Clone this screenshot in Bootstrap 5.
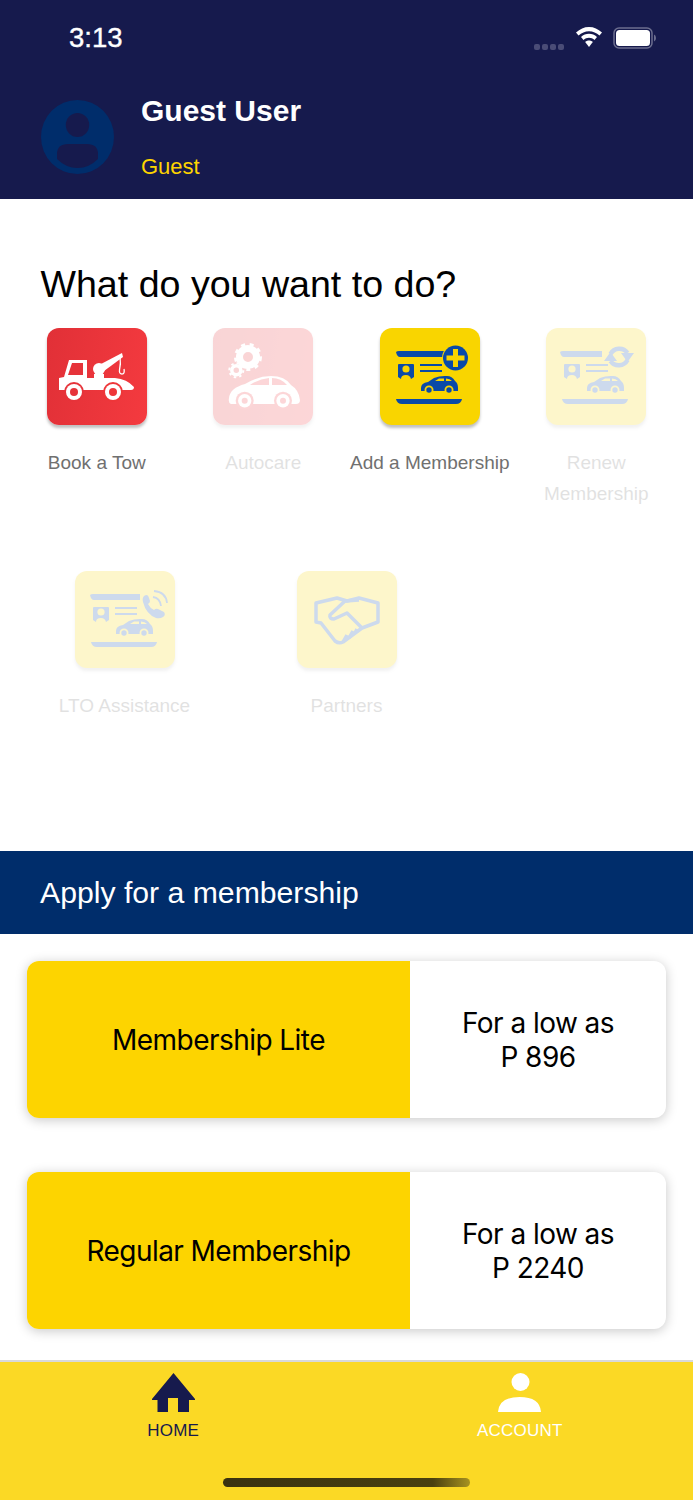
<!DOCTYPE html>
<html lang="en">
<head>
  <meta charset="UTF-8">
  <title>Home</title>
  <link href="https://cdn.jsdelivr.net/npm/bootstrap@5.3.3/dist/css/bootstrap.min.css" rel="stylesheet">
  <style>
    body {
      font-family: "Liberation Sans", Arial, sans-serif;
      background-color: #fff;
      width: 693px;
      height: 1500px;
      overflow: hidden;
    }
    .app-head {
      height: 199px;
      background-color: #161a4d;
      color: #fff;
    }
    .status-row {
      height: 76px;
      padding: 17px 36px 0 69px;
    }
    .clock {
      font-size: 27.5px;
      font-weight: 500;
      line-height: 42px;
      -webkit-text-stroke: .4px #fff;
    }
    .status-icons {
      padding-top: 10px;
    }
    .signal-dots {
      margin-top: 17px;
      margin-right: 3px;
    }
    .signal-dots i {
      display: block;
      width: 6px;
      height: 6px;
      border-radius: 2px;
      background-color: #4a4c76;
      margin-left: 2px;
    }
    .wifi-icon {
      margin-right: 3px;
    }
    .profile-row {
      padding: 0 0 0 41px;
      gap: 27px;
    }
    .avatar {
      width: 73px;
      height: 74px;
      margin-top: 24px;
      flex: none;
    }
    .user-name {
      font-size: 30px;
      font-weight: 700;
      line-height: 34px;
      margin-top: 18px;
    }
    .user-role {
      font-size: 22px;
      line-height: 26px;
      color: #fdd400;
      margin-top: 26px;
    }
    .todo-wrap {
      height: 652px;
      padding: 61px 13.5px 0;
    }
    .todo-title {
      font-size: 37.6px;
      font-weight: 400;
      line-height: 48px;
      color: #000;
      margin: 0 0 20px 27px;
    }
    .tile-cell {
      height: 243px;
      text-align: center;
    }
    .tile {
      display: block;
      width: 100px;
      height: 97px;
      margin: 0 auto;
      border-radius: 12px;
      box-shadow: 0 3px 3px rgba(0, 0, 0, .25);
    }
    .tile-red {
      background: linear-gradient(100deg, #e13037, #f43a3f);
    }
    .tile-yellow {
      background-color: #f9d500;
    }
    .tile-label {
      font-size: 19px;
      line-height: 31px;
      color: #707070;
      margin-top: 22px;
    }
    .tile-off {
      opacity: .2;
    }
    .tile-off .tile-label {
      padding: 0 30px;
    }
    .tile-off .label-wide {
      padding: 0;
    }
    .apply-band {
      height: 83px;
      background-color: #002d6b;
      color: #fff;
      font-size: 30.2px;
      line-height: 83px;
      padding-left: 40px;
    }
    .plans {
      height: 426px;
      padding: 27px 27px 0;
    }
    .plan-card {
      height: 157px;
      margin-bottom: 54px;
      border: 0;
      border-radius: 12px;
      overflow: hidden;
      box-shadow: 0 2px 12px rgba(0, 0, 0, .22);
      font-family: Inter, "Liberation Sans", sans-serif;
      font-size: 28px;
      letter-spacing: -.55px;
      line-height: 34px;
      color: #000;
    }
    .plan-name {
      width: 383px;
      background-color: #fdd400;
    }
    .plan-price {
      padding-top: 1px;
    }
    .app-foot {
      height: 140px;
      background-color: #fbd925;
      border-top: 2px solid #d9d9d9;
      position: relative;
    }
    .foot-item {
      padding-top: 11px;
      text-align: center;
      font-size: 17px;
      letter-spacing: .2px;
      line-height: 20px;
    }
    .foot-item svg {
      display: block;
      margin: 0 auto 9px;
    }
    .foot-home {
      color: #161a4d;
    }
    .foot-account {
      color: #fff;
    }
    .home-bar {
      position: absolute;
      left: 223px;
      top: 116px;
      width: 247px;
      height: 9px;
      border-radius: 5px;
      background: linear-gradient(90deg, #3a3210 0%, #4a400f 85%, #a89320 100%);
    }
  </style>
</head>
<body>
  <svg width="0" height="0" class="position-absolute">
    <defs>
      <symbol id="idCard" viewBox="0 0 100 97">
        <path d="M18 37q0-1 1-1H33q1 0 1 1V49l-3 2q-1-4-5-4q-5 0-5 4l-3-2z"/>
        <circle cx="26" cy="41" r="3.600" fill="#f9d500"/>
        <path d="M40 36H62V38H40zM40 42H62V44H40z"/>
        <path d="M16 71H82Q81 76 76 76H22Q17 76 16 71z"/>
        <path d="M41 60Q41 55 48 54L54 50Q60 47.500 67 48Q72 48 75 53Q78 55 78 60V63H41z"/>
        <path d="M55 53L59 50.500H64V53zM66 50.500Q70 50.500 72 53H66z" fill="#f9d500"/>
        <circle cx="49" cy="62" r="4.500" fill="#f9d500"/>
        <circle cx="69" cy="62" r="4.500" fill="#f9d500"/>
        <circle cx="49" cy="62" r="2.700"/>
        <circle cx="69" cy="62" r="2.700"/>
      </symbol>
    </defs>
  </svg>

  <header class="app-head">
    <div class="status-row d-flex align-items-start justify-content-between">
      <span class="clock">3:13</span>
      <div class="status-icons d-flex align-items-start gap-2">
        <div class="signal-dots d-flex me-1"><i></i><i></i><i></i><i></i></div>
        <svg class="wifi-icon" width="26" height="22" viewBox="0 0 26 22" fill="#fff">
          <path d="M13 0C8 0 4 2 0 5.500L2.500 8.500C5.500 5.800 9 4.200 13 4.200S20.500 5.800 23.500 8.500L26 5.500C22 2 18 0 13 0z"/>
          <path d="M13 6.800C10 6.800 7.300 8 5 10L7.500 13C9 11.700 11 10.800 13 10.800S17 11.700 18.500 13L21 10C18.700 8 16 6.800 13 6.800z"/>
          <path d="M13 13.500C11.500 13.500 10.200 14 9.200 15L13 20L16.800 15C15.800 14 14.500 13.500 13 13.500z"/>
        </svg>
        <svg width="44" height="22" viewBox="0 0 44 22">
          <rect x="1" y="1" width="38" height="20" rx="5" fill="none" stroke="#6c6e8f" stroke-width="1.500"/>
          <rect x="3" y="3" width="34" height="16" rx="3.500" fill="#fff"/>
          <path d="M41 7.500q2 .5 2 3.500t-2 3.500z" fill="#6c6e8f"/>
        </svg>
      </div>
    </div>
    <div class="profile-row d-flex">
      <svg class="avatar" viewBox="0 0 73 74">
        <ellipse cx="36.500" cy="37" rx="36.500" ry="37" fill="#002d6b"/>
        <ellipse cx="36.500" cy="25" rx="11.700" ry="12" fill="#161a4d"/>
        <path d="M16 54Q16 44 27 44H46Q57 44 57 54V59Q48 68 36.500 68T16 59z" fill="#161a4d"/>
      </svg>
      <div>
        <div class="user-name">Guest User</div>
        <div class="user-role">Guest</div>
      </div>
    </div>
  </header>

  <section class="todo-wrap">
    <h1 class="todo-title">What do you want to do?</h1>
    <div class="row row-cols-4 g-0 mx-0">
      <div class="col tile-cell">
        <svg class="tile tile-red" viewBox="0 0 100 97" fill="#fff">
          <path d="M12 50L17 49L22 32H40V50H47V46H57V50H68Q80 51 87 59Q87 62 84 62H12z"/>
          <path d="M25 35H36V47H21z" fill="#e6333a"/>
          <circle cx="52" cy="41" r="6"/>
          <path d="M54 36L75 25L76 29L57 43z"/>
          <path d="M73 28Q74 36 72.500 42Q72 46 75 46Q78 46 77 41" fill="none" stroke="#fff" stroke-width="1.300"/>
          <circle cx="27" cy="64" r="10" fill="#e6333a"/>
          <circle cx="27" cy="64" r="8"/>
          <circle cx="27" cy="64" r="4" fill="#e6333a"/>
          <circle cx="66" cy="64" r="10" fill="#ee3639"/>
          <circle cx="66" cy="64" r="8"/>
          <circle cx="66" cy="64" r="4" fill="#ee3639"/>
        </svg>
        <div class="tile-label">Book a Tow</div>
      </div>
      <div class="col tile-cell">
        <div class="tile-off">
          <svg class="tile tile-red" viewBox="0 0 100 97" fill="#fff">
            <circle cx="35" cy="29" r="8.500" fill="none" stroke="#fff" stroke-width="7"/>
            <circle cx="35" cy="29" r="12.500" fill="none" stroke="#fff" stroke-width="3" stroke-dasharray="4 4.600"/>
            <circle cx="23.300" cy="42.300" r="4.500" fill="none" stroke="#fff" stroke-width="3.500"/>
            <circle cx="23.300" cy="42.300" r="7" fill="none" stroke="#fff" stroke-width="2" stroke-dasharray="2.500 3.000"/>
            <path d="M16 70Q17 60 32 56Q45 48 58 48Q72 48 78 57Q86 62 87 72Q87 76 83 76H18Q15 75 16 70z"/>
            <path d="M37 57Q46 51 56 50V57zM59 50Q68 50 74 57H59z" fill="#f43a3f"/>
            <circle cx="31.700" cy="72.700" r="9" fill="#f43a3f"/>
            <circle cx="31.700" cy="72.700" r="6.700"/>
            <circle cx="31.700" cy="72.700" r="3" fill="#f43a3f"/>
            <circle cx="70" cy="72.700" r="9" fill="#f43a3f"/>
            <circle cx="70" cy="72.700" r="6.700"/>
            <circle cx="70" cy="72.700" r="3" fill="#f43a3f"/>
          </svg>
          <div class="tile-label">Autocare</div>
        </div>
      </div>
      <div class="col tile-cell">
        <svg class="tile tile-yellow" viewBox="0 0 100 97" fill="#0a4aa8">
          <use href="#idCard"/>
          <path d="M16 24q1-1 3-1H65V29H20q-3 0-4-5z"/>
          <circle cx="75.500" cy="30" r="13.500" fill="#f9d500"/>
          <circle cx="75.500" cy="30" r="12.500"/>
          <path d="M73 21H78V27.500H84.500V32.500H78V39H73V32.500H66.500V27.500H73z" fill="#f9d500"/>
        </svg>
        <div class="tile-label">Add a Membership</div>
      </div>
      <div class="col tile-cell">
        <div class="tile-off">
          <svg class="tile tile-yellow" viewBox="0 0 100 97" fill="#0a4aa8">
            <use href="#idCard"/>
            <path d="M14 24q1-1 3-1H56V29H18q-3 0-4-5z"/>
            <path d="M64.500 26A10 10 0 0 1 81.500 25M81.500 32A10 10 0 0 1 64.500 33" fill="none" stroke="#0a4aa8" stroke-width="4.500"/>
            <path d="M75 25H88L81.500 34zM71 33H58L64.500 24z"/>
          </svg>
          <div class="tile-label label-wide">Renew Membership</div>
        </div>
      </div>
    </div>
    <div class="row row-cols-3 g-0 mx-0">
      <div class="col tile-cell">
        <div class="tile-off">
          <svg class="tile tile-yellow" viewBox="0 0 100 97" fill="#0a4aa8">
            <use href="#idCard"/>
            <path d="M15 24q1-1 3-1H65V29H19q-3 0-4-5z"/>
            <path d="M69 25Q73 22 74 27L75 30Q75 32 73 33Q75 37 79 39Q81 37 83 38L89 41Q91 44 88 46Q85 48 81 47Q71 43 68 31Q67 27 69 25z"/>
            <path d="M78 26Q85 27 86 35M79 20Q91 21 92 32" fill="none" stroke="#0a4aa8" stroke-width="1.800"/>
          </svg>
          <div class="tile-label label-wide">LTO Assistance</div>
        </div>
      </div>
      <div class="col tile-cell">
        <div class="tile-off">
          <svg class="tile tile-yellow" viewBox="0 0 100 97" fill="none" stroke="#0a4aa8" stroke-width="3.500" stroke-linejoin="round">
            <path d="M19 32L40 27L50 30L62 27L81 32V51L65 57L46 71Q42 73 38 70L24 52L19 51z"/>
            <path d="M62 29L48 30L33 44Q32 48 37 48L50 42L65 57"/>
            <path d="M46 71L50 64M52 67L56 60M58 62L60 58"/>
          </svg>
          <div class="tile-label">Partners</div>
        </div>
      </div>
      <div class="col"></div>
    </div>
  </section>

  <div class="apply-band">Apply for a membership</div>

  <section class="plans">
    <div class="card plan-card flex-row">
      <div class="plan-name d-flex align-items-center justify-content-center">Membership Lite</div>
      <div class="plan-price flex-grow-1 d-flex align-items-center justify-content-center text-center">For a low as<br>P 896</div>
    </div>
    <div class="card plan-card flex-row">
      <div class="plan-name d-flex align-items-center justify-content-center">Regular Membership</div>
      <div class="plan-price flex-grow-1 d-flex align-items-center justify-content-center text-center">For a low as<br>P 2240</div>
    </div>
  </section>

  <footer class="app-foot">
    <div class="row g-0">
      <div class="col-6 foot-item foot-home">
        <svg width="43" height="39" viewBox="0 0 43 39" fill="#161a4d">
          <path d="M21.500 0L43 26V27H37V39H26V25H16V39H5.500V27H0V26z"/>
        </svg>
        HOME
      </div>
      <div class="col-6 foot-item foot-account">
        <svg width="43" height="39" viewBox="0 0 43 39" fill="#fff">
          <ellipse cx="22.500" cy="9" rx="9" ry="9"/>
          <path d="M0 39Q1 24 21.500 24T43 39z"/>
        </svg>
        ACCOUNT
      </div>
    </div>
    <div class="home-bar"></div>
  </footer>

  <script src="https://cdn.jsdelivr.net/npm/bootstrap@5.3.3/dist/js/bootstrap.bundle.min.js"></script>
</body>
</html>
